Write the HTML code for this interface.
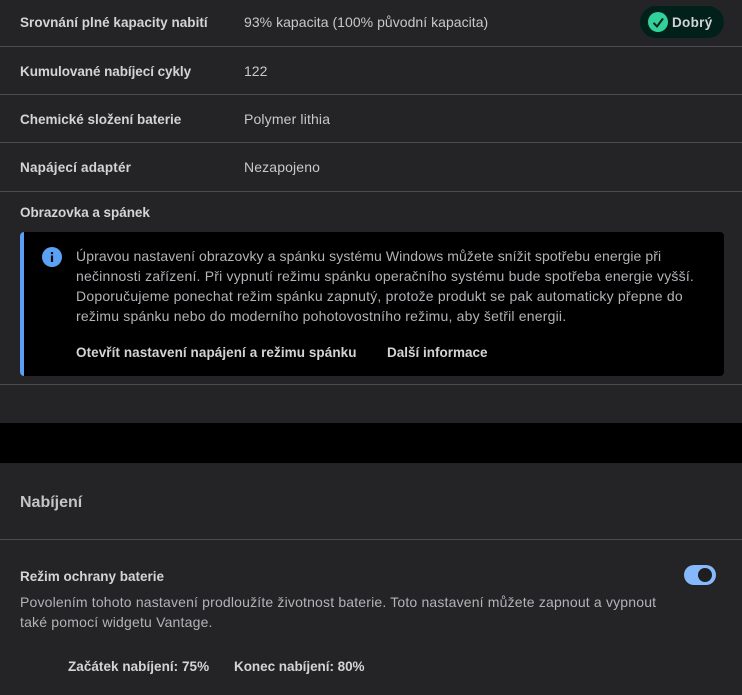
<!DOCTYPE html>
<html lang="cs">
<head>
<meta charset="utf-8">
<style>
html,body{margin:0;padding:0;background:#242426;}
body{width:742px;height:695px;position:relative;overflow:hidden;font-family:"Liberation Sans",sans-serif;color:#cfcfd2;font-size:14px;}
.t{position:absolute;white-space:nowrap;line-height:18px;height:18px;}
.b{font-weight:700;color:#d4d4d6;font-size:13.5px;}
.l{position:absolute;left:0;width:742px;height:1px;background:#4c4b50;}
.v{color:#c9c9cc;}
.p{color:#b3b3b8;font-size:14px;}
</style>
</head>
<body>
<div class="t b" style="left:20px;top:14px;letter-spacing:.03px;">Srovnání plné kapacity nabití</div>
<div class="t v" style="left:244px;top:13px;letter-spacing:.04px;">93% kapacita (100% původní kapacita)</div>
<div style="position:absolute;left:640px;top:6px;width:84px;height:32px;border-radius:16px;background:#02201a;"></div>
<svg style="position:absolute;left:648px;top:12px;" width="20" height="20" viewBox="0 0 20 20"><circle cx="10" cy="10" r="10" fill="#33d19a"/><path d="M5.5 10.8l3.5 3.7 6-8" fill="none" stroke="#10201c" stroke-width="2"/></svg>
<div class="t b" style="left:672px;top:14px;letter-spacing:.3px;">Dobrý</div>
<div class="l" style="top:46px;"></div>

<div class="t b" style="left:20px;top:63px;letter-spacing:-.06px;">Kumulované nabíjecí cykly</div>
<div class="t v" style="left:244px;top:62px;">122</div>
<div class="l" style="top:94px;"></div>

<div class="t b" style="left:20px;top:111px;">Chemické složení baterie</div>
<div class="t v" style="left:244px;top:110px;letter-spacing:.15px;">Polymer lithia</div>
<div class="l" style="top:142px;"></div>

<div class="t b" style="left:20px;top:159px;letter-spacing:.19px;">Napájecí adaptér</div>
<div class="t v" style="left:244px;top:158px;letter-spacing:.13px;">Nezapojeno</div>
<div class="l" style="top:191px;"></div>

<div class="t b" style="left:20px;top:204px;letter-spacing:-.04px;">Obrazovka a spánek</div>

<div style="position:absolute;left:20px;top:232px;width:704px;height:144px;background:#000;border-radius:4px;overflow:hidden;"><div style="width:4px;height:144px;background:#5b9ef5;"></div></div>
<svg style="position:absolute;left:42px;top:247px;" width="20" height="20" viewBox="0 0 20 20"><circle cx="10" cy="10" r="10" fill="#5ba2f7"/><rect x="8.9" y="8.5" width="2.2" height="6.5" fill="#0a0a0a"/><rect x="8.9" y="5" width="2.2" height="2.2" fill="#0a0a0a"/></svg>
<div class="t p" style="left:76px;top:247px;letter-spacing:.09px;">Úpravou nastavení obrazovky a spánku systému Windows můžete snížit spotřebu energie při</div>
<div class="t p" style="left:76px;top:267px;letter-spacing:.2px;">nečinnosti zařízení. Při vypnutí režimu spánku operačního systému bude spotřeba energie vyšší.</div>
<div class="t p" style="left:76px;top:287px;letter-spacing:.21px;">Doporučujeme ponechat režim spánku zapnutý, protože produkt se pak automaticky přepne do</div>
<div class="t p" style="left:76px;top:307px;letter-spacing:.2px;">režimu spánku nebo do moderního pohotovostního režimu, aby šetřil energii.</div>
<div class="t b" style="left:76px;top:344px;letter-spacing:.07px;">Otevřít nastavení napájení a režimu spánku</div>
<div class="t b" style="left:387px;top:344px;">Další informace</div>
<div class="l" style="top:384px;"></div>

<div style="position:absolute;left:0;top:423px;width:742px;height:40px;background:#000;"></div>

<div class="t" style="left:20px;top:494px;font-size:16px;font-weight:700;color:#c4c4c7;">Nabíjení</div>
<div class="l" style="top:539px;"></div>

<div class="t b" style="left:20px;top:568px;">Režim ochrany baterie</div>
<div class="t p" style="left:20px;top:593px;letter-spacing:.175px;">Povolením tohoto nastavení prodloužíte životnost baterie. Toto nastavení můžete zapnout a vypnout</div>
<div class="t p" style="left:20px;top:613px;letter-spacing:.19px;">také pomocí widgetu Vantage.</div>
<div style="position:absolute;left:684px;top:565px;width:32px;height:20px;border-radius:10px;background:#86b9fb;"></div>
<div style="position:absolute;left:698px;top:568px;width:14px;height:14px;border-radius:50%;background:#1e1e20;"></div>

<div class="t b" style="left:68px;top:658px;letter-spacing:.04px;">Začátek nabíjení: 75%</div>
<div class="t b" style="left:234px;top:658px;letter-spacing:-.04px;">Konec nabíjení: 80%</div>
</body>
</html>
